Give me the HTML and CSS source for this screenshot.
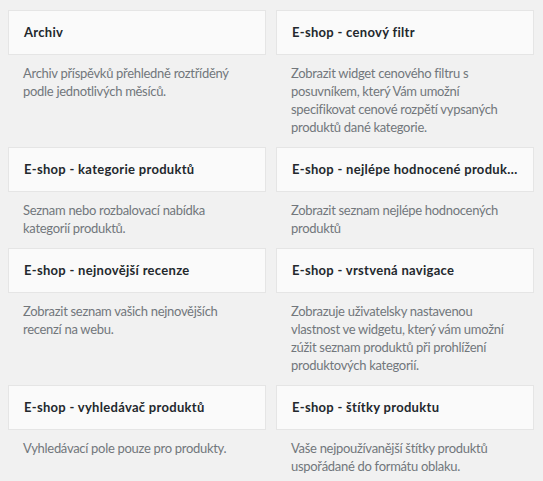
FILE: index.html
```html
<!DOCTYPE html>
<html lang="cs">
<head>
    <meta charset="UTF-8">
    <meta name="viewport" content="width=device-width, initial-scale=1.0">
    <title>Dostupné widgety</title>
    <link rel="stylesheet" href="styles.css">
</head>
<body>

<div id="available-widgets" class="widget-list">

    <div class="widget">
        <div class="widget-top">
            <h3 class="widget-title">Archiv</h3>
        </div>
        <p class="widget-description">Archiv příspěvků přehledně roztříděný podle jednotlivých měsíců.</p>
    </div>

    <div class="widget">
        <div class="widget-top">
            <h3 class="widget-title">E-shop - cenový filtr</h3>
        </div>
        <p class="widget-description">Zobrazit widget cenového filtru s posuvníkem, který Vám umožní specifikovat cenové rozpětí vypsaných produktů dané kategorie.</p>
    </div>

    <div class="widget">
        <div class="widget-top">
            <h3 class="widget-title">E-shop - kategorie produktů</h3>
        </div>
        <p class="widget-description">Seznam nebo rozbalovací nabídka kategorií produktů.</p>
    </div>

    <div class="widget">
        <div class="widget-top">
            <h3 class="widget-title">E-shop - nejlépe hodnocené produkty</h3>
        </div>
        <p class="widget-description">Zobrazit seznam nejlépe hodnocených produktů</p>
    </div>

    <div class="widget">
        <div class="widget-top">
            <h3 class="widget-title">E-shop - nejnovější recenze</h3>
        </div>
        <p class="widget-description">Zobrazit seznam vašich nejnovějších recenzí na webu.</p>
    </div>

    <div class="widget">
        <div class="widget-top">
            <h3 class="widget-title">E-shop - vrstvená navigace</h3>
        </div>
        <p class="widget-description">Zobrazuje uživatelsky nastavenou vlastnost ve widgetu, který vám umožní zúžit seznam produktů při prohlížení produktových kategorií.</p>
    </div>

    <div class="widget">
        <div class="widget-top">
            <h3 class="widget-title">E-shop - vyhledávač produktů</h3>
        </div>
        <p class="widget-description">Vyhledávací pole pouze pro produkty.</p>
    </div>

    <div class="widget">
        <div class="widget-top">
            <h3 class="widget-title">E-shop - štítky produktu</h3>
        </div>
        <p class="widget-description">Vaše nejpoužívanější štítky produktů uspořádané do formátu oblaku.</p>
    </div>

</div>

</body>
</html>
```

FILE: styles.css
```css
body {
    margin: 0;
    background: #f1f1f1;
    font-family: Lato, "Open Sans", sans-serif;
    font-size: 13px;
    color: #444;
}

.widget-list {
    display: grid;
    grid-template-columns: 258px 258px;
    column-gap: 10px;
    padding: 10px 0 0 8px;
}

.widget-top {
    background-color: #fafafa;
    border: 1px solid #e5e5e5;
}

/* title gets cut with dots when too long */
.widget-title {
    margin: 0;
    padding: 15px;
    font-size: 13px;
    line-height: 1;
    font-weight: 700;
    letter-spacing: 0.3px;
    color: #23282d;
    white-space: nowrap;
    overflow: hidden;
    text-overflow: ellipsis;
}

.widget-description {
    margin: 0;
    padding: 9px 15px 11px;
    font-size: 13px;
    line-height: 18px;
    letter-spacing: -0.3px;
    color: #72777c;
}
```
